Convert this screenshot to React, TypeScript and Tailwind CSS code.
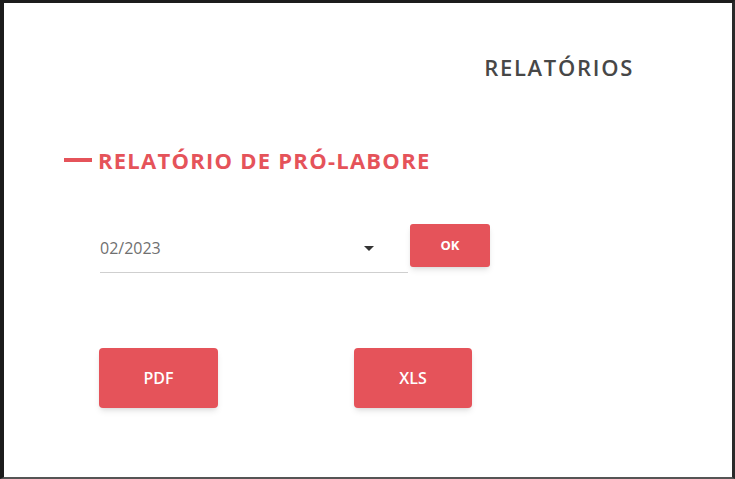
export default function App() {
  return (
    <div
      className="w-[735px] h-[479px] bg-white border-l-4 border-t-[3px] border-r-[3px] border-b-2 border-l-[#1c1c1c] border-t-[#1c1c1c] border-r-[#2a2a2a] border-b-[#555555] flex flex-col"
      style={{ fontFamily: "'Open Sans', Lato, sans-serif" }}
    >
      {/* page title */}
      <div className="flex justify-end pr-[98px] pt-[50px]">
        <h1 className="text-[22px] font-semibold text-[#474747] leading-[28px] tracking-[1.7px]">RELATÓRIOS</h1>
      </div>

      {/* section heading */}
      <div className="flex items-center gap-[6px] pl-[60px] mt-[66px]">
        <span className="w-[28px] h-[4px] bg-[#e5535a]" />
        <h2 className="text-[22px] font-bold text-[#e5535a] leading-[26px] tracking-[1.25px]">
          RELATÓRIO DE PRÓ-LABORE
        </h2>
      </div>

      {/* month select */}
      <div className="flex items-start pl-[96px] mt-[51px] gap-[2px]">
        <div className="w-[308px] h-[49px] border-b border-[#cfcfcf] flex items-center justify-between pr-[34px]">
          <span className="text-[16px] text-[#707070]">02/2023</span>
          <svg width="10" height="5" viewBox="0 0 10 5">
            <path d="M0 0h10L5 5z" fill="#333333" />
          </svg>
        </div>
        <button className="w-[80px] h-[43px] rounded-[3px] bg-[#e5535a] shadow-md text-white text-[13px] font-bold">
          OK
        </button>
      </div>

      {/* export buttons */}
      <div className="flex pl-[95px] mt-[75px] gap-[136px]">
        <button className="w-[119px] h-[60px] rounded-[4px] bg-[#e5535a] shadow-md text-white text-[16px] font-semibold">
          PDF
        </button>
        <button className="w-[118px] h-[60px] rounded-[4px] bg-[#e5535a] shadow-md text-white text-[16px] font-semibold">
          XLS
        </button>
      </div>
    </div>
  );
}
